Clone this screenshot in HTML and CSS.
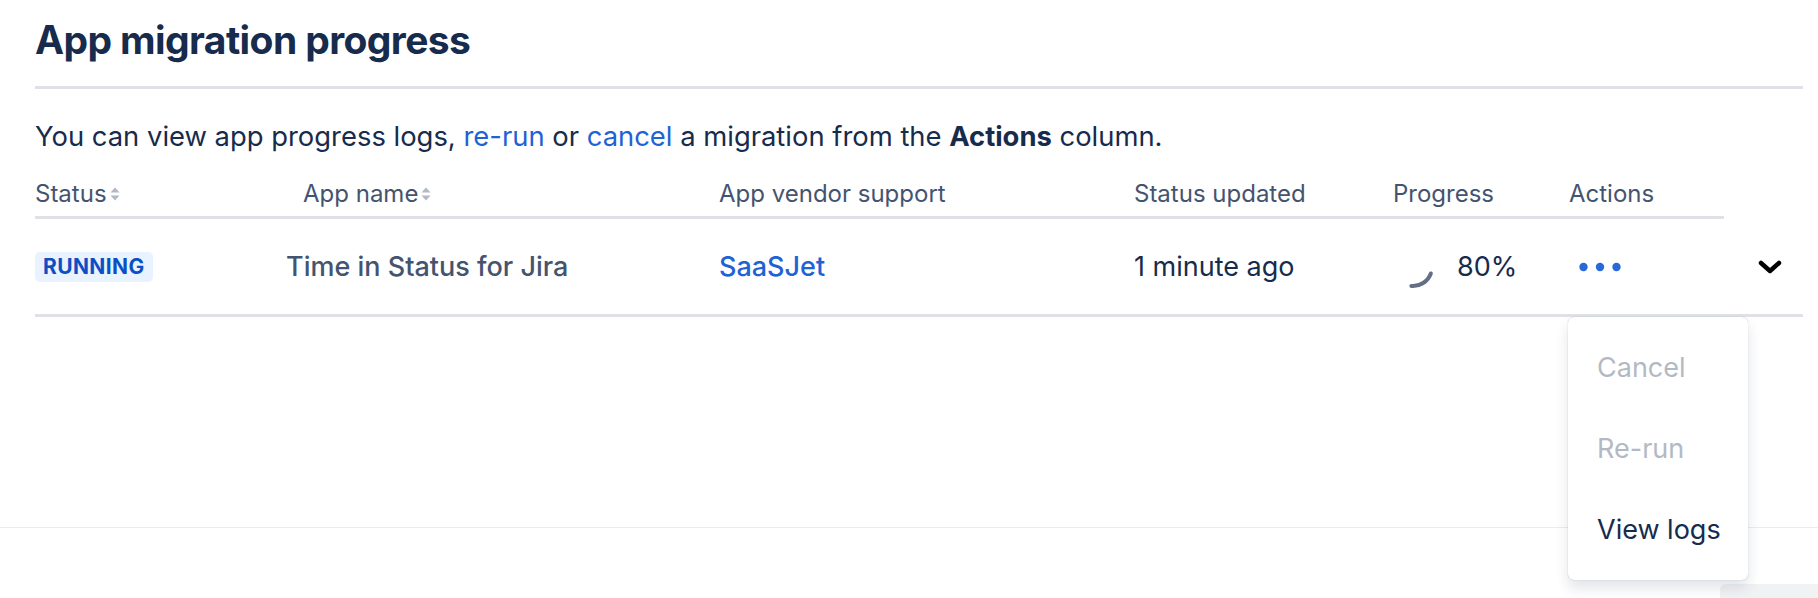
FILE: index.html
```html
<!DOCTYPE html>
<html lang="en">

<head>
    <meta charset="UTF-8">
    <meta name="viewport" content="width=device-width, initial-scale=1.0">
    <title>App migration progress</title>
    <link rel="stylesheet" href="styles.css">
</head>

<body>
    <div class="page">
        <h1 class="title">App migration progress</h1>

        <p class="intro">You can view app progress logs, <a href="#">re-run</a> or <a href="#">cancel</a> a migration from the <strong>Actions</strong> column.</p>

        <div class="table">
            <!-- header -->
            <div class="th">Status
                <svg class="sort" width="12" height="16" viewBox="0 0 12 16"><path d="M6 1.5 L10.5 6.5 H1.5 Z M6 14.5 L10.5 9.5 H1.5 Z" /></svg>
            </div>
            <div class="th th-name">App name
                <svg class="sort" width="12" height="16" viewBox="0 0 12 16"><path d="M6 1.5 L10.5 6.5 H1.5 Z M6 14.5 L10.5 9.5 H1.5 Z" /></svg>
            </div>
            <div class="th">App vendor support</div>
            <div class="th">Status updated</div>
            <div class="th">Progress</div>
            <div class="th">Actions</div>
            <div class="th th-blank"></div>

            <!-- row -->
            <div class="td"><span class="lozenge">Running</span></div>
            <div class="td td-name">Time in Status for Jira</div>
            <div class="td"><a class="vendor" href="#">SaaSJet</a></div>
            <div class="td td-dark">1 minute ago</div>
            <div class="td td-dark td-progress">
                <svg class="spinner" width="44" height="44" viewBox="0 0 44 44">
                    <path d="M39.85 28.5 A19 19 0 0 1 20.34 40.93" />
                </svg>
                80%
            </div>
            <div class="td td-actions">
                <svg width="42" height="10" viewBox="0 0 42 10">
                    <circle cx="4.5" cy="5" r="4.2" />
                    <circle cx="21" cy="5" r="4.2" />
                    <circle cx="37.5" cy="5" r="4.2" />
                </svg>
            </div>
            <div class="td td-expand">
                <svg width="24" height="14" viewBox="0 0 24 14">
                    <path d="M3 3 L12 11 L21 3" />
                </svg>
            </div>

            <div class="menu">
                <div class="menu-item disabled">Cancel</div>
                <div class="menu-item disabled">Re-run</div>
                <div class="menu-item">View logs</div>
            </div>
        </div>
    </div>

    <footer class="footer">
        <button class="footer-btn"></button>
    </footer>
</body>

</html>
```

FILE: styles.css
```css
* {
    box-sizing: border-box;
    margin: 0;
    padding: 0;
}

body {
    font-family: Inter, "Noto Sans", sans-serif;
    background: #fff;
    color: #172b4d;
    width: 1818px;
    height: 598px;
    overflow: hidden;
}

a {
    color: #1f62d6;
    text-decoration: none;
}

.page {
    padding: 16px 15px 0 35px;
}

.title {
    font-size: 39px;
    line-height: 48px;
    font-weight: 700;
    letter-spacing: -0.6px;
    color: #172b4d;
    padding-bottom: 22px;
    border-bottom: 3px solid #dfe1e6;
}

.intro {
    margin-top: 29px;
    font-size: 27.4px;
    line-height: 36px;
}

.table {
    position: relative;
    margin-top: 24px;
    display: grid;
    grid-template-columns: 245px 439px 415px 259px 176px 155px 1fr;
}

.th {
    display: flex;
    align-items: center;
    gap: 2px;
    font-size: 24px;
    line-height: 32px;
    color: #44546f;
    padding-bottom: 6px;
    border-bottom: 3px solid #dfe1e6;
}

.th-name {
    padding-left: 23px;
}

.th-blank {
    border-bottom: none;
}

.sort {
    fill: #b3b9c4;
}

.td {
    display: flex;
    align-items: center;
    height: 98px;
    font-size: 27px;
    border-bottom: 3px solid #dfe1e6;
}

.lozenge {
    display: inline-block;
    background: #e9f2ff;
    color: #0c4fc4;
    font-size: 21px;
    font-weight: 700;
    text-transform: uppercase;
    line-height: 30px;
    padding: 0 8px;
    border-radius: 5px;
    letter-spacing: 0.4px;
}

.td-name {
    padding-left: 6px;
    color: #44546f;
    font-weight: 500;
}

.vendor {
    font-weight: 500;
}

.td-dark {
    color: #172b4d;
}

.td-progress {
    gap: 22px;
    margin-left: -2px;
}

.spinner path {
    fill: none;
    stroke: #626f86;
    stroke-width: 4;
    stroke-linecap: round;
}

.td-actions {
    padding-left: 10px;
}

.td-actions svg {
    fill: #2868d8;
}

.td-expand {
    padding-left: 34px;
}

.td-expand path {
    fill: none;
    stroke: #000;
    stroke-width: 4.5;
    stroke-linecap: round;
    stroke-linejoin: round;
}

/* actions dropdown, opened under the row */
.menu {
    position: absolute;
    left: 1533px;
    top: 139px;
    width: 180px;
    padding: 10px 0;
    background: #fff;
    border-radius: 6px;
    box-shadow: 0 8px 14px rgba(9, 30, 66, 0.12), 0 0 1px rgba(9, 30, 66, 0.35);
    z-index: 2;
}

.menu-item {
    height: 81px;
    display: flex;
    align-items: center;
    padding-left: 29px;
    font-size: 27px;
    color: #172b4d;
}

.menu-item.disabled {
    color: #b3b9c4;
}

.footer {
    position: absolute;
    top: 527px;
    left: 0;
    width: 1818px;
    height: 71px;
    border-top: 1px solid #ebecf0;
}

.footer-btn {
    position: absolute;
    left: 1720px;
    top: 56px;
    width: 140px;
    height: 40px;
    border: none;
    border-radius: 6px;
    background: #f1f2f4;
}
```
